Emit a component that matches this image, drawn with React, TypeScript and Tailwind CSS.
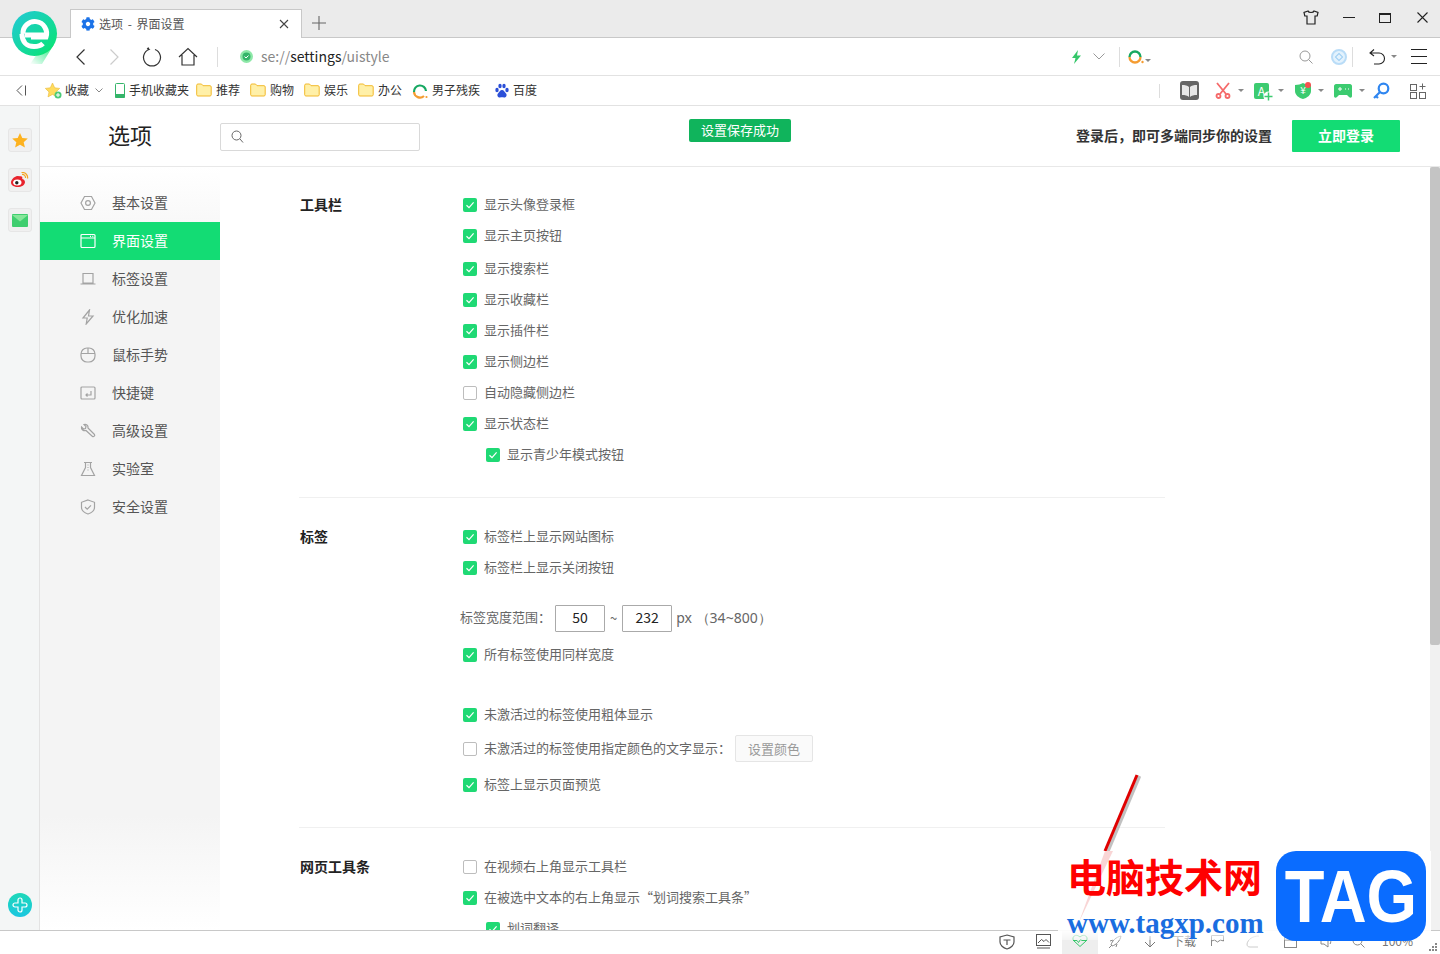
import React from "react";
import { FaCog } from "react-icons/fa";

const FONT = "font-['Noto_Sans_CJK_SC','Noto_Sans',sans-serif]";

function Check({ on = true }: { on?: boolean }) {
  return on ? (
    <span className="flex h-[14px] w-[14px] shrink-0 items-center justify-center rounded-[2px] bg-[#1fd974]">
      <svg width="10" height="10" viewBox="0 0 10 10" fill="none" stroke="#fff" strokeWidth="1.2">
        <path d="M1.5 5.2 4 7.6 8.6 2.4" />
      </svg>
    </span>
  ) : (
    <span className="h-[14px] w-[14px] shrink-0 rounded-[2px] border border-[#bdbdbd] bg-white" />
  );
}

function Row({ label, on = true, sub = false, h = "h-[31px]", children }: { label: string; on?: boolean; sub?: boolean; h?: string; children?: React.ReactNode }) {
  return (
    <div className={`flex items-center ${h} ${sub ? "pl-[23px]" : ""}`}>
      <Check on={on} />
      <span className="ml-[7px] pb-[2px] text-[13px] text-[#666]">{label}</span>
      {children}
    </div>
  );
}

function Section({ title, children, className = "" }: { title: string; children: React.ReactNode; className?: string }) {
  return (
    <section className={`flex pl-[80px] ${className}`}>
      <h2 className="w-[163px] shrink-0 text-[14px] font-bold leading-[31px] text-[#222]">{title}</h2>
      <div className="flex-1">{children}</div>
    </section>
  );
}

const I = ({ children, w = 20, h = 20, vb, className = "" }: { children: React.ReactNode; w?: number; h?: number; vb?: string; className?: string }) => (
  <svg width={w} height={h} viewBox={vb ?? `0 0 ${w} ${h}`} fill="none" stroke="currentColor" strokeWidth="1.2" className={className}>
    {children}
  </svg>
);

const Folder = () => (
  <svg width="16" height="14" viewBox="0 0 16 14" className="shrink-0">
    <path d="M.7 2.2c0-.7.5-1.2 1.2-1.2h3.6l1.5 1.7h7c.7 0 1.2.5 1.2 1.2v7.9c0 .7-.5 1.2-1.2 1.2H1.9c-.7 0-1.2-.5-1.2-1.2z" fill="#fff0a8" stroke="#f2b92c" />
  </svg>
);

const Caret = ({ className = "" }: { className?: string }) => (
  <span className={`inline-block h-0 w-0 border-x-[3px] border-t-[3px] border-x-transparent border-t-[#888] ${className}`} />
);

const navItems: [string, React.ReactNode][] = [
  ["基本设置", <I key="a" w={16} h={16}><path d="M4.5 1.5h7L15 8l-3.500 6.500h-7L1 8z" /><circle cx="8" cy="8" r="2.400" /></I>],
  ["界面设置", <I key="b" w={16} h={16}><rect x="1" y="1.500" width="14" height="13" rx="1" /><path d="M1 5h14M10 3.300h1M12.300 3.300h1" /></I>],
  ["标签设置", <I key="c" w={16} h={16}><path d="M3 2.500h10v9.500H3zM.500 13h15" /></I>],
  ["优化加速", <I key="d" w={16} h={16}><path d="M9.500 1 3 9h4.200l-1 6L13 7H8.500z" /></I>],
  ["鼠标手势", <I key="e" w={16} h={16}><rect x="1" y="1" width="14" height="14" rx="6" /><path d="M1 6.500h14M8 1v5.500" /></I>],
  ["快捷键", <I key="f" w={16} h={16}><rect x="1" y="2" width="14" height="12" rx="1" /><path d="M11 6v4H6M7.500 8.500 6 10l1.500 1.500" /></I>],
  ["高级设置", <I key="g" w={16} h={16}><path d="M1.500 4 3.500 6l2-.5.500-2L4 1.500c2-.8 4.500.8 4 3.500l6.500 6.500c.8 1-.8 2.800-2 2L6 7.500C3.500 8.200 1 6.500 1.500 4z" /></I>],
  ["实验室", <I key="h" w={16} h={16}><path d="M4 1.500h8M5.500 1.500v5L1.500 14.500h13l-4-8v-5M7.500 4h1M7.500 6.500h1M7.500 9h1" /></I>],
  ["安全设置", <I key="i" w={16} h={16}><path d="M8 1 14.500 3.300v5C14.500 11.500 11 14 8 15 5 14 1.500 11.500 1.500 8.300v-5z" /><path d="m5 8 2.200 2.200L11 6.300" /></I>],
];

function Logo() {
  return (
    <svg width="50" height="56" viewBox="0 0 50 56" className="absolute left-[10px] top-[9px] z-20">
      <defs>
        <linearGradient id="lg" x1="0" y1="0" x2="1" y2="1">
          <stop offset="0" stopColor="#22c8d8" />
          <stop offset="1" stopColor="#08e66e" />
        </linearGradient>
        <linearGradient id="lg2" x1="1" y1="0" x2="0" y2="1">
          <stop offset="0" stopColor="#0ae36f" />
          <stop offset="1" stopColor="#0ae36f" stopOpacity="0" />
        </linearGradient>
      </defs>
      <circle cx="24.500" cy="24.500" r="22.500" fill="url(#lg)" />
      <path d="M46 32 32 55H20l7-10c8-1 15-6 19-13z" fill="url(#lg2)" />
      <path d="M13 25a11.800 11.800 0 1 1 23 3H21" fill="none" stroke="#fff" strokeWidth="5" />
      <path d="M12 25c0 8 5 12.500 12 12.500 4 0 7-1 9-3" fill="none" stroke="#fff" strokeWidth="5" />
      <rect x="15" y="23.500" width="21" height="5" fill="#fff" />
    </svg>
  );
}

export default function App() {
  return (
    <div className={`relative flex h-[954px] w-[1440px] flex-col overflow-hidden bg-white ${FONT}`}>
      <Logo />
      {/* Title bar */}
      <header className="flex h-[38px] shrink-0 items-end border-b border-[#c8c8c8] bg-[#ebebeb] pl-[70px]">
        <div className="relative top-px flex h-[29px] w-[232px] items-center border border-b-0 border-[#c8c8c8] bg-white pl-[10px] pr-[12px]">
          <FaCog className="h-[14px] w-[14px] shrink-0 text-[#1c73e8]" />
          <span className="ml-[4px] flex-1 text-[12px] text-[#555] [word-spacing:2px]">选项 - 界面设置</span>
          <svg width="10" height="10" viewBox="0 0 10 10" stroke="#444" strokeWidth="1.100"><path d="m1 1 8 8M9 1 1 9" /></svg>
        </div>
        <svg width="14" height="14" viewBox="0 0 14 14" stroke="#666" strokeWidth="1.100" className="mb-[7px] ml-[10px]"><path d="M7 0v14M0 7h14" /></svg>
        <div className="ml-auto flex h-[37px] items-center pb-[2px] text-[#222]">
          <svg width="16" height="15" viewBox="0 0 16 15" fill="none" stroke="#222" strokeWidth="1.200" className="mr-[24px]"><path d="M5 1 1 2.500l.8 3.500H4v8h8V6h2.200L15 2.500 11 1c-.5 2-5.500 2-6 0z" /></svg>
          <span className="mr-[24px] h-px w-[12px] bg-[#222]" />
          <span className="mr-[26px] h-[10px] w-[12px] border border-t-[2px] border-[#222]" />
          <svg width="11" height="11" viewBox="0 0 11 11" stroke="#222" strokeWidth="1.100" className="mr-[12px]"><path d="m.5.500 10 10M10.500.500l-10 10" /></svg>
        </div>
      </header>

      {/* Nav bar */}
      <nav className="flex h-[38px] shrink-0 items-center border-b border-[#e2e2e2] bg-white pl-[75px] text-[#333]">
        <I w={11} h={16}><path d="M9.500 .500 2 8l7.500 7.500" /></I>
        <I w={11} h={16} className="ml-[23px] text-[#ccc]"><path d="M1.500 .500 9 8l-7.500 7.500" /></I>
        <I w={20} h={20} className="ml-[22px]"><path d="M13 2.500A8.500 8.500 0 1 1 7 2.500L5 1.500M7 2.500 6 .500" /></I>
        <I w={20} h={20} className="ml-[16px]"><path d="M1 10 10 1.500 19 10M4 8v10h12V8" /></I>
        <span className="ml-[19px] h-[20px] w-px bg-[#ddd]" />
        <span className="ml-[22px] flex h-[13px] w-[13px] items-center justify-center rounded-full bg-[#8ee8a8]">
          <svg width="9" height="9" viewBox="0 0 9 9"><circle cx="4.500" cy="4.500" r="4" fill="#35b56a" /><path d="m2.500 4.500 1.500 1.500 2.500-2.500" fill="none" stroke="#fff" /></svg>
        </span>
        <span className="ml-[8px] text-[14px] text-[#888]">se://<span className="text-[#222]">settings</span>/uistyle</span>
        <div className="ml-auto flex items-center pr-[13px]">
          <svg width="11" height="14" viewBox="0 0 11 14" fill="#35c76a"><path d="M7 0 1 8h3.500L3 14l7-8.500H6z" /></svg>
          <svg width="12" height="7" viewBox="0 0 12 7" fill="none" stroke="#999" className="ml-[11px]"><path d="m.5.500 5.500 5.500L11.500.500" /></svg>
          <span className="ml-[14px] h-[20px] w-px bg-[#ddd]" />
          <svg width="16" height="16" viewBox="0 0 16 16" fill="none" strokeWidth="2.300" className="ml-[8px]"><path d="M1.500 8a5.500 5.500 0 0 1 11 0" stroke="#17a862" /><path d="M1.500 8a5.500 5.500 0 0 0 11 0" stroke="#f59c31" /><circle cx="14.500" cy="13" r="1.200" fill="#f59c31" stroke="none" /></svg>
          <Caret className="ml-[1px] mt-[8px]" />
          <svg width="14" height="14" viewBox="0 0 14 14" fill="none" stroke="#999" className="ml-[148px]"><circle cx="6" cy="6" r="5" /><path d="m9.500 9.500 4 4" /></svg>
          <span className="ml-[18px] flex h-[16px] w-[16px] items-center justify-center rounded-full border-2 border-[#b9dcf7] bg-[#e3f2fd]"><span className="h-[6px] w-[6px] rotate-45 border border-[#9bcdf2]" /></span>
          <span className="ml-[5px] h-[20px] w-px bg-[#ddd]" />
          <svg width="18" height="16" viewBox="0 0 16 16" fill="none" stroke="#222" strokeWidth="1.100" className="ml-[15px]"><path d="M5 .500 1 4l4 3M1 4h9a4.500 4.500 0 0 1 0 11H5" /></svg>
          <Caret className="ml-[5px]" />
          <span className="ml-[14px] flex w-[16px] flex-col gap-[6px]">
            <span className="h-px bg-[#222]" /><span className="h-px bg-[#222]" /><span className="h-px bg-[#222]" />
          </span>
        </div>
      </nav>

      {/* Bookmarks */}
      <div className="flex h-[30px] shrink-0 items-center border-b border-[#e2e2e2] bg-white pl-[16px] text-[12px] text-[#333] [&>span]:pb-[2px]">
        <svg width="10" height="11" viewBox="0 0 10 11" fill="none" stroke="#555"><path d="M6 .500 1 5.500l5 5M9.500 .500v10" /></svg>
        <svg width="17" height="16" viewBox="0 0 17 16" className="ml-[19px]"><path d="m7.500 0 2.200 4.800 5 .6-3.700 3.500 1 5L7.500 11.400 3 13.900l1-5L.3 5.400l5-.6z" fill="#ffdc5e" stroke="#e9b839" strokeWidth=".6" /><circle cx="13" cy="12" r="3.500" fill="#4ccb78" /><path d="M13 10v4M11 12h4" stroke="#fff" /></svg>
        <span className="ml-[3px]">收藏</span>
        <svg width="8" height="5" viewBox="0 0 8 5" fill="none" stroke="#888" className="ml-[6px]"><path d="m.5.500 3.500 3.500L7.500.500" /></svg>
        <svg width="10" height="15" viewBox="0 0 10 15" className="ml-[12px] shrink-0"><rect x=".5" y=".5" width="9" height="14" rx="1" fill="#fff" stroke="#35b56a" /><rect x="0" y="11" width="10" height="4" rx="1" fill="#35b56a" /></svg>
        <span className="ml-[4px]">手机收藏夹</span>
        <span className="ml-[7px]"><Folder /></span>
        <span className="ml-[4px]">推荐</span>
        <span className="ml-[10px]"><Folder /></span>
        <span className="ml-[4px]">购物</span>
        <span className="ml-[10px]"><Folder /></span>
        <span className="ml-[4px]">娱乐</span>
        <span className="ml-[10px]"><Folder /></span>
        <span className="ml-[4px]">办公</span>
        <svg width="16" height="16" viewBox="0 0 16 16" fill="none" strokeWidth="2.200" className="ml-[10px]"><path d="M2 9a6 6 0 0 1 12-1" stroke="#17a862" /><path d="M2 9a6 6 0 0 0 10 4" stroke="#f59c31" /><circle cx="14.500" cy="14" r="1.100" fill="#f59c31" stroke="none" /></svg>
        <span className="ml-[4px] whitespace-nowrap">男子残疾</span>
        <svg width="16" height="16" viewBox="0 0 16 16" fill="#2b4fd8" className="ml-[14px]"><ellipse cx="3" cy="7" rx="1.700" ry="2.200" /><ellipse cx="6" cy="3" rx="1.700" ry="2.200" /><ellipse cx="10" cy="3" rx="1.700" ry="2.200" /><ellipse cx="13" cy="7" rx="1.700" ry="2.200" /><path d="M8 7c-2 0-2.500 2-4 3.500S4 15 6 14.500c1.300-.3 2.700-.3 4 0 2 .5 3.500-2.500 2-4S10 7 8 7z" /></svg>
        <span className="ml-[3px]">百度</span>
        <div className="ml-auto flex items-center pr-[14px]">
          <span className="h-[14px] w-px bg-[#ddd]" />
          <span className="ml-[20px] flex h-[19px] w-[19px] items-center justify-center rounded-[3px] bg-[#666]">
            <svg width="15" height="13" viewBox="0 0 15 13" fill="#e8e8e8"><path d="M0 1c3 0 5.500.5 7 2v10c-1.500-1.500-4-2-7-2zM15 1c-3 0-5.500.5-7 2v10c1.500-1.500 4-2 7-2z" /></svg>
          </span>
          <svg width="16" height="17" viewBox="0 0 16 17" fill="none" stroke="#f56a6a" strokeWidth="1.800" className="ml-[16px]"><path d="m2 1 9 11M14 1 5 12" /><circle cx="3.500" cy="14" r="2" /><circle cx="12.500" cy="14" r="2" /></svg>
          <Caret className="ml-[7px]" />
          <span className="relative ml-[10px] h-[16px] w-[15px] rounded-[2px] bg-[#3ccb70] text-center text-[12px] leading-[15px] text-white">A
            <svg width="11" height="11" viewBox="0 0 11 11" className="absolute -bottom-[3px] -right-[5px]"><circle cx="5.500" cy="5.500" r="5" fill="#fff" /><path d="M5.500 1.500v8M1.500 5.500h8" stroke="#3ccb70" strokeWidth="1.500" /></svg>
          </span>
          <Caret className="ml-[9px]" />
          <svg width="16" height="18" viewBox="0 0 16 18" className="ml-[11px]"><path d="M0 3c3 0 6-1 8-2 2 1 5 2 8 2v6c0 4-4 7-8 8-4-1-8-4-8-8z" fill="#3ccb70" /><text x="8" y="12" fontSize="10" fill="#fff" textAnchor="middle">¥</text><circle cx="13" cy="3" r="3" fill="#f65050" /></svg>
          <Caret className="ml-[7px]" />
          <svg width="18" height="14" viewBox="0 0 18 14" className="ml-[10px]"><path d="M2 0h14c1 0 2 1 2 2v10c0 2-2 2-3 1l-2-2H5l-2 2c-1 1-3 1-3-1V2c0-1 1-2 2-2z" fill="#3ccb70" /><path d="M4 5h4M6 3v4M11 5h1M14 5h1" stroke="#fff" /></svg>
          <Caret className="ml-[7px]" />
          <svg width="17" height="17" viewBox="0 0 17 17" fill="none" stroke="#2f86f0" strokeWidth="2.200" className="ml-[8px]"><circle cx="10.500" cy="6.500" r="4.800" /><path d="M7 10 1 16M3 14l2 2" /></svg>
          <svg width="16" height="16" viewBox="0 0 16 16" fill="none" stroke="#666" className="ml-[20px]"><rect x=".5" y="1.500" width="6" height="6" /><rect x=".5" y="9.500" width="6" height="6" /><rect x="9.500" y="9.500" width="6" height="6" /><path d="M12.500.500v6M9.500 3.500h6" /></svg>
        </div>
      </div>

      {/* Main */}
      <div className="flex min-h-0 flex-1">
        {/* Rail */}
        <aside className="flex w-[40px] shrink-0 flex-col items-center border-r border-[#e3e3e3] bg-[#f4f6f6] pt-[22px]">
          <span className="flex h-[24px] w-[24px] items-center justify-center rounded-[3px] border border-[#e6e6e6] bg-[#f0f0f0]">
            <svg width="16" height="15" viewBox="0 0 16 15" fill="#fdb21f"><path d="m8 0 2.300 5 5.500.5-4.100 3.700 1.200 5.400L8 11.800l-4.900 2.800 1.200-5.400L.2 5.500 5.700 5z" /></svg>
          </span>
          <span className="mt-[16px] flex h-[24px] w-[24px] items-center justify-center rounded-[3px] border border-[#e6e6e6] bg-[#f0f0f0]">
            <svg width="19" height="16" viewBox="0 0 18 16"><path d="M7 4C3.500 4.500.5 8 .5 10.500c0 3 3.500 4.500 6.500 4.500 4 0 7.500-2 7.500-5 0-2-2-2.800-2.800-3 .5-1.500 0-3-2-2.700z" fill="#e8232c" /><ellipse cx="6.800" cy="10.500" rx="4.200" ry="3" fill="#fff" /><circle cx="6.300" cy="10.700" r="1.700" fill="#222" /><path d="M11.500 2.500c2-.3 3.800 1.300 3.500 3.500M11 .5c3.500-.5 6.800 2.500 6 6" fill="none" stroke="#f5a623" strokeWidth="1.200" /></svg>
          </span>
          <span className="mt-[16px] flex h-[24px] w-[24px] items-center justify-center rounded-[3px] border border-[#e6e6e6] bg-[#f0f0f0]">
            <svg width="16" height="13" viewBox="0 0 16 13"><rect width="16" height="13" rx="1" fill="#3fce6f" /><path d="M0 1h16L8 7.500z" fill="#86e69a" /></svg>
          </span>
          <span className="mt-auto mb-[13px] flex h-[24px] w-[24px] items-center justify-center rounded-full bg-gradient-to-b from-[#1fd8b8] to-[#1cc6e0]">
            <svg width="16" height="16" viewBox="0 0 16 16" fill="none" stroke="#fff" strokeWidth="1.200"><path d="M6 3a2 2 0 0 1 4 0v3h3a2 2 0 0 1 0 4h-3v3a2 2 0 0 1-4 0v-3H3a2 2 0 0 1 0-4h3z" /></svg>
          </span>
        </aside>

        <div className="flex min-w-0 flex-1 flex-col">
          {/* Top header */}
          <div className="flex h-[61px] shrink-0 items-center border-b border-[#e8e8e8] pr-[40px]">
            <div className="w-[180px] pb-[4px] pl-[68px] text-[22px] text-[#222]">选项</div>
            <div className="mt-[1px] flex h-[28px] w-[200px] items-center rounded-[2px] border border-[#d9d9d9] pl-[10px]">
              <svg width="13" height="13" viewBox="0 0 13 13" fill="none" stroke="#666"><circle cx="5.500" cy="5.500" r="4.500" /><path d="m9 9 3 3.500" /></svg>
            </div>
            <div className="ml-[269px] flex h-[23px] w-[102px] -translate-y-[6px] items-center justify-center rounded-[2px] bg-[#10b45c] text-[13px] text-white">设置保存成功</div>
            <div className="ml-auto pb-[2px] text-[14px] font-bold text-[#333]">登录后，即可多端同步你的设置</div>
            <button className="ml-[20px] h-[32px] w-[108px] rounded-[1px] bg-[#13dc74] pb-[2px] text-[14px] font-bold text-white">立即登录</button>
          </div>

          <div className="flex min-h-0 flex-1">
            {/* Sidebar */}
            <div className="flex w-[180px] shrink-0 flex-col bg-[linear-gradient(#ffffff,#f4f4f4_12%,#f4f4f4_85%,#ffffff)] pt-[17px]">
              {navItems.map(([label, icon], i) => (
                <div key={label} className={`flex h-[38px] items-center pl-[40px] text-[14px] ${i === 1 ? "bg-[#13dc74] text-white" : "text-[#555]"}`}>
                  <span className={i === 1 ? "text-white" : "text-[#a3a3a3]"}>{icon}</span>
                  <span className="ml-[16px] pb-[2px]">{label}</span>
                </div>
              ))}
            </div>

            {/* Content */}
            <main className="relative min-w-0 flex-1 overflow-hidden pt-[22px]">
              <div className="w-[945px]">
                <Section title="工具栏" className="pb-[27px]">
                  <Row label="显示头像登录框" />
                  <Row label="显示主页按钮" />
                  <Row label="显示搜索栏" h="h-[31px] mt-[2px]" />
                  <Row label="显示收藏栏" />
                  <Row label="显示插件栏" />
                  <Row label="显示侧边栏" />
                  <Row label="自动隐藏侧边栏" on={false} />
                  <Row label="显示状态栏" />
                  <Row label="显示青少年模式按钮" sub />
                </Section>
                <div className="ml-[79px] h-px bg-[#f0f0f0]" />
                <Section title="标签" className="pb-[27px] pt-[23px]">
                  <Row label="标签栏上显示网站图标" />
                  <Row label="标签栏上显示关闭按钮" />
                  <div className="mt-[22px] flex h-[26px] items-center text-[13px] text-[#666]">
                    <span className="-ml-[3px] pb-[2px]">标签宽度范围：</span>
                    <span className="ml-[4px] flex h-[27px] w-[50px] items-center justify-center rounded-[1px] border border-[#aaa] pb-[2px] text-[14px] text-[#222]">50</span>
                    <span className="mx-[5px]">~</span>
                    <span className="flex h-[27px] w-[50px] items-center justify-center rounded-[1px] border border-[#aaa] pb-[2px] text-[14px] text-[#222]">232</span>
                    <span className="ml-[4px] pb-[2px] text-[14px] font-['Noto_Sans',sans-serif]">px （34~800）</span>
                  </div>
                  <Row label="所有标签使用同样宽度" h="h-[31px] mt-[8px]" />
                  <Row label="未激活过的标签使用粗体显示" h="h-[31px] mt-[29px]" />
                  <Row label="未激活过的标签使用指定颜色的文字显示：" on={false} h="h-[37px]">
                    <span className="ml-[4px] flex h-[27px] w-[78px] items-center justify-center rounded-[2px] border border-[#e5e5e5] bg-[#fafafa] text-[13px] text-[#999]">设置颜色</span>
                  </Row>
                  <Row label="标签上显示页面预览" h="h-[31px] mt-[2px]" />
                </Section>
                <div className="ml-[79px] h-px bg-[#f0f0f0]" />
                <Section title="网页工具条" className="pt-[23px]">
                  <Row label="在视频右上角显示工具栏" on={false} />
                  <Row label="在被选中文本的右上角显示“划词搜索工具条”" />
                  <Row label="划词翻译" sub />
                </Section>
              </div>
              {/* Scrollbar */}
              <div className="absolute right-0 top-0 h-full w-[10px] bg-[#f1f1f1]">
                <div className="h-[478px] w-full rounded-[2px] bg-[#c4c4c4]" />
              </div>
            </main>
          </div>
        </div>
      </div>

      {/* Status bar */}
      <footer className="relative flex h-[24px] shrink-0 items-center border-t border-[#c8c8c8] bg-white text-[#555]">
        <div className="absolute left-[999px] top-[3px]"><svg width="16" height="16" viewBox="0 0 16 16" fill="none" stroke="#555" strokeWidth="1.200"><path d="M8 1 15 3v5c0 3-3 6-7 7-4-1-7-4-7-7V3z" /><path d="M4.500 6h7M8 6v5" /></svg></div>
        <div className="absolute left-[1036px] top-[3px]"><svg width="15" height="15" viewBox="0 0 15 15" fill="none" stroke="#555"><rect x=".5" y=".5" width="14" height="11" /><path d="m2 9 3.500-3.500 2.500 2 2-2 3 3M1 14h13" /></svg></div>
        <div className="absolute left-[1062px] top-0 flex h-[23px] w-[36px] items-start justify-center bg-[#eeeeee] pt-[3px]"><svg width="16" height="13" viewBox="0 0 16 13" fill="none" stroke="#35c76a"><path d="M8 12.500 1.500 6.500C-.5 3 3.500-1 8 3c4.500-4 8.500 0 6.500 3.500z" /><path d="M1 6.500h4l1.500 2 2-3 1.500 1h5" /></svg></div>
        <div className="absolute left-[1108px] top-[4px]"><svg width="14" height="14" viewBox="0 0 14 14" fill="none" stroke="#888"><path d="M13 1C8 2 4 6 3 10l1 1c4-1 8-5 9-10zM1 13l3-3M5 5 2 6M9 9l-1 3" /></svg></div>
        <div className="absolute left-[1144px] top-[5px]"><svg width="12" height="12" viewBox="0 0 12 12" fill="none" stroke="#777"><path d="M6 0v11M1 6l5 5 5-5" /></svg></div>
        <span className="absolute left-[1172px] top-[1px] text-[12px] text-[#777]">下载</span>
        <div className="absolute left-[1211px] top-[4px]"><svg width="13" height="12" viewBox="0 0 13 12" fill="none" stroke="#888"><path d="M.5 11V.5h12V6l-3-1-3 2-3-2-3 1" /></svg></div>
        <div className="absolute left-[1246px] top-[4px]"><svg width="14" height="13" viewBox="0 0 14 13" fill="none" stroke="#ccc"><path d="M13 1C7 1 2 4 1 9c0 2 1 3 3 3h8" /></svg></div>
        <div className="absolute left-[1284px] top-[4px]"><svg width="13" height="13" viewBox="0 0 13 13" fill="none" stroke="#888"><rect x=".5" y=".5" width="12" height="12" /><path d="M.5 5h12" /></svg></div>
        <div className="absolute left-[1320px] top-[4px]"><svg width="14" height="13" viewBox="0 0 14 13" fill="none" stroke="#888"><path d="M1 4h3l4-3v11L4 9H1zM10 4c1 1 1 4 0 5" /></svg></div>
        <div className="absolute left-[1352px] top-[4px]"><svg width="13" height="13" viewBox="0 0 13 13" fill="none" stroke="#888"><circle cx="5.500" cy="5.500" r="4.500" /><path d="m9 9 3.500 3.500" /></svg></div>
        <span className="absolute left-[1382px] top-[1px] text-[12px] text-[#777]">100%</span>
        <div className="absolute right-[3px] bottom-[3px] grid grid-cols-3 gap-[1px]">
          <span /><span /><span className="h-[2px] w-[2px] bg-[#888]" />
          <span /><span className="h-[2px] w-[2px] bg-[#888]" /><span className="h-[2px] w-[2px] bg-[#888]" />
          <span className="h-[2px] w-[2px] bg-[#888]" /><span className="h-[2px] w-[2px] bg-[#888]" /><span className="h-[2px] w-[2px] bg-[#888]" />
        </div>
      </footer>

      {/* Watermark overlay */}
      <div className="pointer-events-none absolute left-[1058px] top-[851px] h-[89px] w-[373px] bg-gradient-to-b from-white from-[88%] to-white/40" />
      <svg width="70" height="170" viewBox="0 0 70 170" className="pointer-events-none absolute left-[1072px] top-[770px]">
        <path d="M66 5 34 81" stroke="#999" strokeWidth="3.500" opacity=".6" transform="translate(1.500 1)" />
        <path d="M65 5 33 81" stroke="#e00000" strokeWidth="3" />
        <path d="M33 81h8L7 152z" fill="#f9d5d5" />
      </svg>
      <div className="pointer-events-none absolute left-[1067px] top-[849px] text-[39px] font-bold leading-[52px] text-[#ff0000]">电脑技术网</div>
      <div className="pointer-events-none absolute left-[1067px] top-[905px] font-['Liberation_Serif',serif] text-[29px] font-bold leading-[36px] text-[#1a6de0]">www.tagxp.com</div>
      <div className="pointer-events-none absolute left-[1276px] top-[851px] flex h-[90px] w-[150px] items-center justify-center rounded-[20px] bg-[#0a6cff] font-['Liberation_Sans',sans-serif] text-[65px] font-bold leading-none text-white"><span className="scale-y-[1.14]">TAG</span></div>
    </div>
  );
}
